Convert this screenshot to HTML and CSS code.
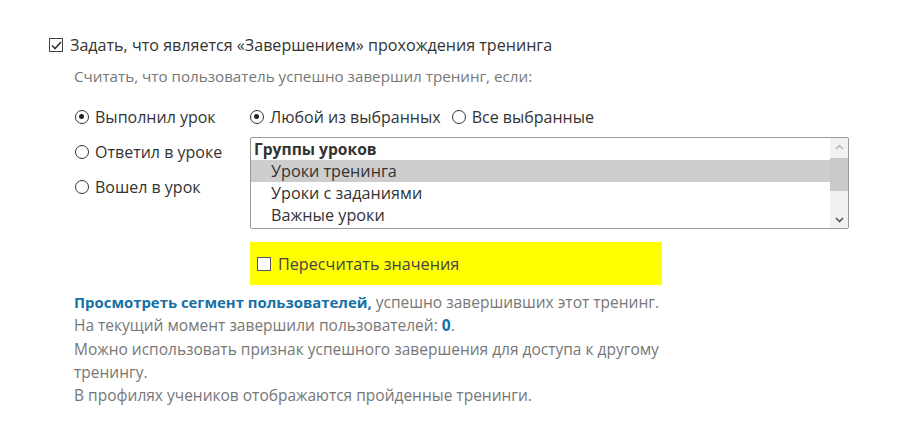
FILE: index.html
```html
<!DOCTYPE html>
<html lang="ru">
<head>
<meta charset="utf-8">
<link rel="stylesheet" href="styles.css">
</head>
<body>
<div class="page">
  <div class="main-check">
    <span class="cb cb-checked"><svg width="11" height="9" viewBox="0 0 11 9"><path d="M1 4.5 L4 7.5 L10 1" fill="none" stroke="#333" stroke-width="1.6"/></svg></span>
    <span class="main-label">Задать, что является «Завершением» прохождения тренинга</span>
  </div>
  <div class="content">
    <div class="subtitle">Считать, что пользователь успешно завершил тренинг, если:</div>
    <div class="grid">
      <div class="left">
        <div class="radio-row"><span class="rb rb-on"></span><span>Выполнил урок</span></div>
        <div class="radio-row"><span class="rb"></span><span>Ответил в уроке</span></div>
        <div class="radio-row"><span class="rb"></span><span>Вошел в урок</span></div>
      </div>
      <div class="right">
        <div class="mode-row">
          <span class="rb rb-on"></span><span>Любой из выбранных</span>
          <span class="rb rb-gap"></span><span>Все выбранные</span>
        </div>
        <div class="listbox">
          <div class="options">
            <div class="opt-group">Группы уроков</div>
            <div class="opt opt-sel">Уроки тренинга</div>
            <div class="opt">Уроки с заданиями</div>
            <div class="opt">Важные уроки</div>
          </div>
          <div class="scrollbar">
            <div class="arrow"><svg width="9" height="6" viewBox="0 0 9 6"><path d="M1 5 L4.5 1.5 L8 5" fill="none" stroke="#b5b5b5" stroke-width="1.5"/></svg></div>
            <div class="track"><div class="thumb"></div></div>
            <div class="arrow"><svg width="9" height="6" viewBox="0 0 9 6"><path d="M1 1 L4.5 4.5 L8 1" fill="none" stroke="#555" stroke-width="1.6"/></svg></div>
          </div>
        </div>
        <div class="recalc">
          <span class="cb cb-yellow"></span><span>Пересчитать значения</span>
        </div>
      </div>
    </div>
    <div class="info">
      <p><a class="link">Просмотреть сегмент пользователей,</a> успешно завершивших этот тренинг.</p>
      <p>На текущий момент завершили пользователей: <b class="num">0</b>.</p>
      <p>Можно использовать признак успешного завершения для доступа к другому тренингу.</p>
      <p>В профилях учеников отображаются пройденные тренинги.</p>
    </div>
  </div>
</div>
</body>
</html>
```
FILE: styles.css
```css
* { box-sizing: border-box; }
html, body { margin: 0; padding: 0; background: #fff; }
body {
  font-family: "Open Sans", "Lato", sans-serif;
  color: #333;
  font-size: 15px;
}
.page { padding: 35px 0 0 49px; }
.main-check {
  display: flex;
  align-items: center;
  gap: 7px;
  height: 20px;
  color: #333;
  font-size: 16.1px;
}
.cb {
  width: 14px; height: 14px;
  border: 1.5px solid #444;
  background: #fff;
  display: inline-flex;
  align-items: center;
  justify-content: center;
  flex: none;
}
.content { padding-left: 25px; }
.subtitle {
  margin-top: 11px;
  font-size: 15.2px;
  color: #777;
  height: 20px;
  line-height: 20px;
}
.grid {
  display: flex;
  margin-top: 21px;
  margin-left: 1px;
}
.left { width: 175px; display: flex; flex-direction: column; gap: 15px; }
.radio-row, .mode-row {
  display: flex;
  align-items: center;
  gap: 6px;
  height: 20px;
  font-size: 16px;
  color: #333;
}
.rb {
  width: 14px; height: 14px;
  border-radius: 50%;
  border: 1.4px solid #333;
  flex: none;
  position: relative;
  background: #fff;
}
.rb-on::after {
  content: "";
  position: absolute;
  left: 3px; top: 3px;
  width: 5.2px; height: 5.2px;
  border-radius: 50%;
  background: #222;
}
.rb-gap { margin-left: 5px; }
.mode-row { gap: 6px; }
.listbox {
  margin-top: 10px;
  width: 599px;
  height: 92px;
  border: 1px solid #999;
  border-radius: 2px;
  display: flex;
  overflow: hidden;
}
.options { flex: 1; padding-top: 0; }
.opt-group {
  font-weight: bold;
  height: 22px;
  line-height: 22px;
  padding-left: 3px;
  font-size: 15.6px;
  color: #333;
}
.opt {
  height: 22px;
  line-height: 22px;
  padding-left: 20px;
  font-size: 16.2px;
  color: #333;
}
.opt-sel { background: #cdcdcd; }
.scrollbar {
  width: 18px;
  background: #f1f1f1;
  display: flex;
  flex-direction: column;
}
.arrow { height: 17px; display: flex; align-items: center; justify-content: center; }
.track { flex: 1; padding: 3px 0 0 0; }
.thumb { height: 33px; background: #c9c9c9; }
.recalc {
  margin-top: 13px;
  width: 412px;
  height: 43px;
  background: #ffff00;
  display: flex;
  align-items: center;
  gap: 7px;
  padding-left: 7px;
  font-size: 16.2px;
  color: #444;
}
.cb-yellow { border: 1.5px solid #555; }
.info {
  margin-top: 6px;
  width: 600px;
  font-size: 15.5px;
  color: #777;
  line-height: 23.3px;
}
.info p { margin: 0; }
.link { color: #1570a6; font-weight: bold; text-decoration: none; font-size: 14.9px; }
.num { color: #1570a6; }
```
